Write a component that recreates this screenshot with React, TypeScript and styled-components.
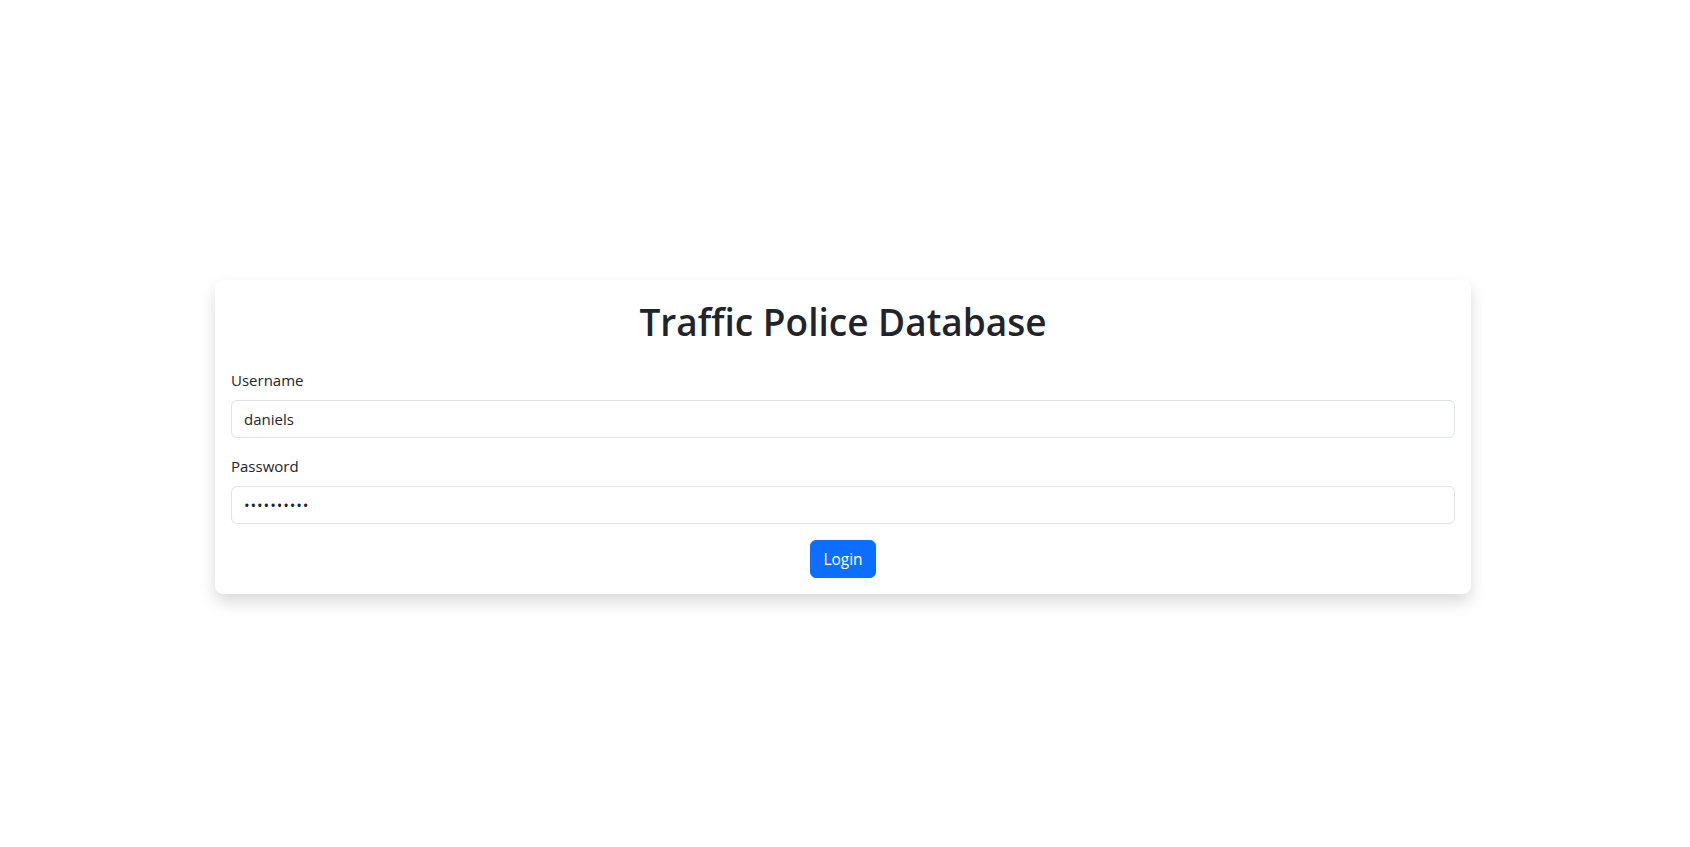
import React from "react";
import styled, { createGlobalStyle } from "styled-components";

const GlobalStyle = createGlobalStyle`
  html, body {
    margin: 0;
    padding: 0;
    background: #ffffff;
    color: #212529;
    font-family: "Open Sans", "Noto Sans", Arial, sans-serif;
    font-size: 16px;
  }
  * { box-sizing: border-box; }
`;

const Page = styled.div`
  min-height: 847px;
  display: flex;
  align-items: center;
  justify-content: center;
  padding: 26px 4px 0 0;
`;

const Card = styled.form`
  width: 1256px;
  background: #fff;
  border-radius: 8px;
  box-shadow: 0 8px 16px rgba(0, 0, 0, 0.15);
  padding: 16px;
  display: flex;
  flex-direction: column;
`;

const Title = styled.h1`
  margin: 2px 0 22px;
  font-size: 37px;
  line-height: 48px;
  font-weight: 550;
  text-align: center;
  color: #212529;
`;

const Field = styled.div`
  display: flex;
  flex-direction: column;
  margin-bottom: 16px;
`;

const Label = styled.label`
  font-size: 15px;
  line-height: 24px;
  margin-bottom: 8px;
  color: #212529;
`;

const Input = styled.input<{ $masked?: boolean }>`
  height: 38px;
  width: 100%;
  padding: 6px 12px;
  border: 1px solid #dee2e6;
  border-radius: 6px;
  font-family: inherit;
  font-size: 15px;
  letter-spacing: ${(p) => (p.$masked ? "0.9px" : "normal")};
  color: #212529;
  background: #fff;
  outline: none;
`;

const Actions = styled.div`
  display: flex;
  justify-content: center;
`;

const Button = styled.button`
  height: 38px;
  padding: 6px 12px;
  border: 1px solid #0d6efd;
  border-radius: 6px;
  background: #0d6efd;
  color: #fff;
  font-family: inherit;
  font-size: 15.5px;
  line-height: 24px;
  cursor: pointer;
`;

export default function App() {
  return (
    <>
      <GlobalStyle />
      <Page>
        <Card onSubmit={(e) => e.preventDefault()}>
          <Title>Traffic Police Database</Title>
          <Field>
            <Label htmlFor="username">Username</Label>
            <Input id="username" type="text" defaultValue="daniels" />
          </Field>
          <Field>
            <Label htmlFor="password">Password</Label>
            <Input id="password" type="password" defaultValue="daniels123" $masked />
          </Field>
          <Actions>
            <Button type="submit">Login</Button>
          </Actions>
        </Card>
      </Page>
    </>
  );
}
